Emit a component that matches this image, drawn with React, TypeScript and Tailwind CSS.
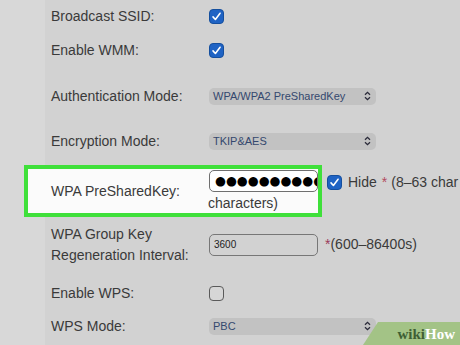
import React from 'react';

const Check: React.FC<{ checked?: boolean }> = ({ checked }) =>
  checked ? (
    <span className="flex h-[15px] w-[15px] items-center justify-center rounded-[4px] border border-[#154f9e] bg-[#1f63c4]">
      <svg width="11" height="11" viewBox="0 0 12 12">
        <path d="M2.2 6.4 L4.8 9.2 L9.9 2.4" fill="none" stroke="#fff" strokeWidth="1.7" strokeLinecap="round" strokeLinejoin="round" />
      </svg>
    </span>
  ) : (
    <span className="block h-[15px] w-[15px] rounded-[4px] border border-[#5a5a5a] bg-[#d6d6d6]" />
  );

const Select: React.FC<{ value: string }> = ({ value }) => (
  <div className="flex h-[17px] w-[167px] items-center justify-between rounded-[5px] bg-[#c2c2c2] pl-[4px] pr-[5px] text-[11px] text-[#34486e]">
    <span>{value}</span>
    <svg width="7" height="10" viewBox="0 0 7 10">
      <path d="M1 3.8 L3.5 1.3 L6 3.8 M1 6.2 L3.5 8.7 L6 6.2" fill="none" stroke="#2b2b3a" strokeWidth="1.3" />
    </svg>
  </div>
);

const Row: React.FC<{ label: React.ReactNode; h: string; children?: React.ReactNode }> = ({ label, h, children }) => (
  <div className={`flex items-center ${h}`}>
    <div className="w-[158px] leading-[21px]">{label}</div>
    {children}
  </div>
);

export default function App() {
  return (
    <div
      className="relative flex h-[345px] w-[460px] overflow-hidden bg-[#d2d2d2] text-[14px] text-[#3a3a3a]"
      style={{ fontFamily: '"Liberation Sans", Arial, sans-serif' }}
    >
      <div className="w-[45px] shrink-0 bg-[#d8d8d8]" />
      <div className="flex flex-1 flex-col pl-[6px]">
        <Row label="Broadcast SSID:" h="h-[33px]">
          <Check checked />
        </Row>
        <Row label="Enable WMM:" h="h-[35px]">
          <Check checked />
        </Row>
        <Row label="Authentication Mode:" h="h-[56px]">
          <Select value="WPA/WPA2 PreSharedKey" />
        </Row>
        <Row label="Encryption Mode:" h="h-[34px]">
          <Select value="TKIP&AES" />
        </Row>

        <div className="mt-[7px] flex h-[52px] items-center">
          <div className="-ml-[27px] flex h-[52px] w-[298px] shrink-0 border-[4px] border-[#3fe03a] bg-[#fbfbfb]">
            <div className="flex w-[181px] items-center pl-[23px]">WPA PreSharedKey:</div>
            <div className="flex flex-col pt-[1px]">
              <div className="flex h-[22px] w-[109px] items-center overflow-hidden whitespace-nowrap rounded-[5px] border border-[#6f6f6f] bg-white pl-[5px] text-[12.5px] text-black" style={{ fontFamily: '"DejaVu Sans", sans-serif' }}>
                ●●●●●●●●●●
              </div>
              <div className="-ml-[1px] mt-[1px] leading-[20px]">characters)</div>
            </div>
          </div>
          <div className="-mt-[18px] ml-[5px] flex items-center whitespace-nowrap">
            <Check checked />
            <span className="ml-[6px]">Hide</span>
            <span className="ml-[5px] text-[#b24a5e]">*</span>
            <span className="ml-[4px]">(8–63 char</span>
          </div>
        </div>

        <Row
          label={
            <>
              WPA Group Key
              <br />
              Regeneration Interval:
            </>
          }
          h="h-[55px]"
        >
          <div className="flex h-[22px] w-[109px] items-center rounded-[5px] border border-[#777] pl-[4px] text-[10px] text-[#222]">3600</div>
          <span className="ml-[7px] text-[#9a3a5a]">*</span>
          <span>(600–86400s)</span>
        </Row>
        <Row label="Enable WPS:" h="h-[42px]">
          <Check />
        </Row>
        <Row label="WPS Mode:" h="h-[24px]">
          <Select value="PBC" />
        </Row>
      </div>

      <div
        className="absolute bottom-0 right-0 flex h-[23px] w-[97px] items-center justify-end bg-[#a3c386] pr-[5px] pt-[1px] text-[15px] font-bold"
        style={{ clipPath: 'polygon(15px 0, 100% 0, 100% 100%, 0 100%)', fontFamily: '"Liberation Serif", serif' }}
      >
        <span className="text-[#3f5f34]">wiki</span>
        <span className="text-white">How</span>
      </div>
    </div>
  );
}
